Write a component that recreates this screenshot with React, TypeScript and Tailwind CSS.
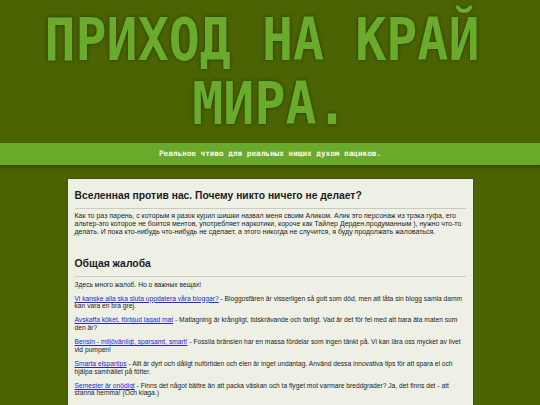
const entries = [
  {
    title: 'Vi kanske alla ska sluta uppdatera våra bloggar?',
    text: 'Bloggosfären är visserligen så gott som död, men att låta sin blogg samla damm kan vara en bra grej.',
  },
  {
    title: 'Avskaffa köket, förbjud lagad mat',
    text: 'Matlagning är krångligt, tidskrävande och farligt. Vad är det för fel med att bara äta maten som den är?',
  },
  {
    title: 'Bensin - miljövänligt, sparsamt, smart!',
    text: 'Fossila bränslen har en massa fördelar som ingen tänkt på. Vi kan lära oss mycket av livet vid pumpen!',
  },
  {
    title: 'Smarta elspartips',
    text: 'Allt är dyrt och dåligt nuförtiden och elen är inget undantag. Använd dessa innovativa tips för att spara el och hjälpa samhället på fötter.',
  },
  {
    title: 'Semester är onödigt',
    text: 'Finns det något bättre än att packa väskan och ta flyget mot varmare breddgrader? Ja, det finns det - att stanna hemma! (Och klaga.)',
  },
  {
    title: 'Modern minimalism är trams',
    text: 'det handlar inte om att slänga onödigt skräp, utan att använda det man har.',
  },
];

export default function App() {
  return (
    <div className="min-h-screen w-full bg-[#4b6302] overflow-hidden">
      {/* big title */}
      <header className="pt-[8px] pb-[7px]">
        <h1 className="scale-x-[0.89] text-center font-['DejaVu_Sans_Mono',monospace] font-bold text-[58px] leading-[64px] text-[#6aab2c] [text-shadow:0_0_4px_#263400]">
          <span className="block pr-[18px]">ПРИХОД НА КРАЙ</span>
          <span className="block">МИРА.</span>
        </h1>
      </header>

      {/* tagline bar */}
      <div className="h-[22px] bg-[#6aaa2a] flex items-center justify-center shadow-[0_2px_3px_rgba(0,0,0,0.35)]">
        <p className="font-['DejaVu_Sans_Mono',monospace] font-bold text-[7.7px] text-[#f4f8ee]">
          Реальное чтиво для реальных нищих духом пациков.
        </p>
      </div>

      {/* content card */}
      <main className="mt-[14px] mx-auto w-[405px] bg-[#eef0e6] px-[7px] pt-[9px] pb-4 font-['Liberation_Sans',Arial,sans-serif] text-[#1c1c1c] shadow-[0_0_2px_rgba(0,0,0,0.3)]">
        <h2 className="text-[10.3px] font-bold pb-[5px] border-b border-[#c9cbc2]">
          Вселенная против нас. Почему никто ничего не делает?
        </h2>
        <p className="mt-[2.5px] text-[7px] leading-[8px]">
          Как то раз парень, с которым я разок курил шишки назвал меня своим Аликом. Алик это персонаж из трэка гуфа, его
          альтер-эго которое не боится ментов, употребляет наркотики, короче как Тайлер Дерден.продуманным ), нужно что-то
          делать. И пока кто-нибудь что-нибудь не сделает, а этого никогда не случится, я буду продолжать жаловаться.
        </p>

        <h2 className="mt-[20px] text-[10.4px] font-bold pb-[4px] border-b border-[#c9cbc2]">Общая жалоба</h2>
        <p className="mt-[4px] text-[6.7px] leading-[8px]">Здесь много жалоб. Но о важных вещах!</p>

        <div className="mt-[6px] flex flex-col gap-[7.3px]">
          {entries.map((e) => (
            <p key={e.title} className="text-[6.7px] leading-[7.3px]">
              <a href="#" className="text-[#2626cc] underline">
                {e.title}
              </a>{' '}
              - {e.text}
            </p>
          ))}
        </div>
      </main>
    </div>
  );
}
